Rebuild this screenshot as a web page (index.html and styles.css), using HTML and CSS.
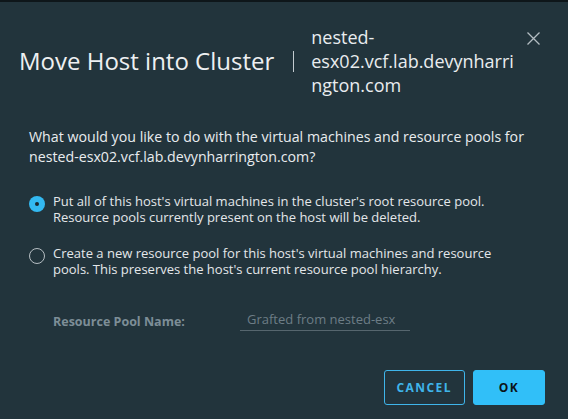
FILE: index.html
```html
<!DOCTYPE html>
<html lang="en">
<head>
  <meta charset="UTF-8">
  <title>Move Host into Cluster</title>
  <link rel="stylesheet" href="styles.css">
</head>
<body>

  <div class="modal">
    <header class="modal-header">
      <h3 class="modal-title">Move Host into Cluster</h3>
      <span class="title-divider"></span>
      <div class="modal-subtitle">nested-esx02.vcf.lab.devynharrington.com</div>
      <button class="close" type="button" aria-label="Close">
        <svg width="13" height="13" viewBox="0 0 13 13">
          <path d="M0.5 0.5 L12.5 12.5 M12.5 0.5 L0.5 12.5" stroke="currentColor" stroke-width="1.3" fill="none"/>
        </svg>
      </button>
    </header>

    <div class="modal-body">
      <p class="question">What would you like to do with the virtual machines and resource pools for nested-esx02.vcf.lab.devynharrington.com?</p>

      <div class="options">
        <label class="radio">
          <span class="radio-mark checked"></span>
          <span class="radio-text">Put all of this host's virtual machines in the cluster's root resource pool. Resource pools currently present on the host will be deleted.</span>
        </label>
        <label class="radio">
          <span class="radio-mark"></span>
          <span class="radio-text">Create a new resource pool for this host's virtual machines and resource pools. This preserves the host's current resource pool hierarchy.</span>
        </label>
      </div>

      <div class="field-row">
        <label class="field-label" for="poolName">Resource Pool Name:</label>
        <input class="field-input" id="poolName" type="text" placeholder="Grafted from nested-esx" disabled>
      </div>
    </div>

    <footer class="modal-footer">
      <button class="btn btn-outline" type="button">Cancel</button>
      <button class="btn btn-primary" type="button">OK</button>
    </footer>
  </div>

</body>
</html>
```

FILE: styles.css
```css
body {
  margin: 0;
  background-color: #22343c;
  font-family: 'Open Sans', 'Noto Sans', sans-serif;
  color: #e9ecef;
}

.modal {
  border-top: 2px solid #0e161a;
  min-height: 417px;
  box-sizing: border-box;
}

/* cabecera: titulo | host | cerrar */
.modal-header {
  display: flex;
  align-items: center;
  padding: 23px 28px 0 19px;
}

.modal-title {
  margin: 0;
  font-size: 24px;
  font-weight: 400;
  line-height: 32px;
  color: #eef0f2;
  white-space: nowrap;
}

.title-divider {
  width: 1px;
  height: 21px;
  margin: 0 17px 0 19px;
  background-color: #c3cbd0;
}

.modal-subtitle {
  flex: 1;
  min-width: 0;
  margin-right: 5px;
  font-size: 18px;
  line-height: 24px;
  color: #e9ecef;
  overflow-wrap: break-word;
}

.close {
  align-self: flex-start;
  margin-top: 7px;
  padding: 0;
  border: none;
  background: none;
  color: #b3bcc2;
  width: 13px;
  height: 13px;
  cursor: pointer;
}

.close svg {
  display: block;
}

.modal-body {
  padding: 0 23px 0 29px;
}

.question {
  margin: 30px 0 0 0;
  font-size: 14.2px;
  line-height: 20px;
}

.options {
  margin-top: 26px;
  display: flex;
  flex-direction: column;
  gap: 20px;
}

.radio {
  display: flex;
  align-items: flex-start;
  gap: 8px;
  cursor: pointer;
}

.radio-mark {
  flex: none;
  width: 16px;
  height: 16px;
  margin-top: 3px;
  border-radius: 50%;
  box-sizing: border-box;
  border: 1.5px solid #b6bec3;
  position: relative;
}

.radio-mark.checked {
  border: none;
  background-color: #33b9f1;
}

.radio-mark.checked::after {
  content: "";
  position: absolute;
  left: 6px;
  top: 6px;
  width: 4px;
  height: 4px;
  border-radius: 50%;
  background-color: #1a2830;
}

.radio-text {
  width: 460px;
  font-size: 13px;
  line-height: 16px;
  color: #e4e7ea;
}

.field-row {
  display: flex;
  align-items: flex-start;
  margin-top: 30px;
  padding-left: 24px;
}

.field-label {
  width: 187px;
  padding-top: 6px;
  font-size: 12.5px;
  font-weight: 700;
  line-height: 18px;
  color: #7d8e97;
}

.field-input {
  width: 170px;
  height: 24px;
  box-sizing: border-box;
  padding: 0 7px;
  border: none;
  border-bottom: 1px solid #56666e;
  background: transparent;
  font-family: inherit;
  font-size: 13px;
  color: #6d7d86;
  outline: none;
}

.field-input::placeholder {
  color: #6d7d86;
}

.modal-footer {
  display: flex;
  justify-content: flex-end;
  gap: 8px;
  margin-top: 39px;
  padding-right: 23px;
}

.btn {
  height: 35px;
  min-width: 72px;
  padding: 0 12px;
  box-sizing: border-box;
  border-radius: 3px;
  font-family: inherit;
  font-size: 12px;
  font-weight: 700;
  letter-spacing: 0.12em;
  text-transform: uppercase;
  cursor: pointer;
}

.btn-outline {
  border: 1px solid #3fb5ea;
  background: transparent;
  color: #3fb5ea;
}

.btn-primary {
  border: 1px solid #31bff8;
  background-color: #31bff8;
  color: #0c1418;
}
```
